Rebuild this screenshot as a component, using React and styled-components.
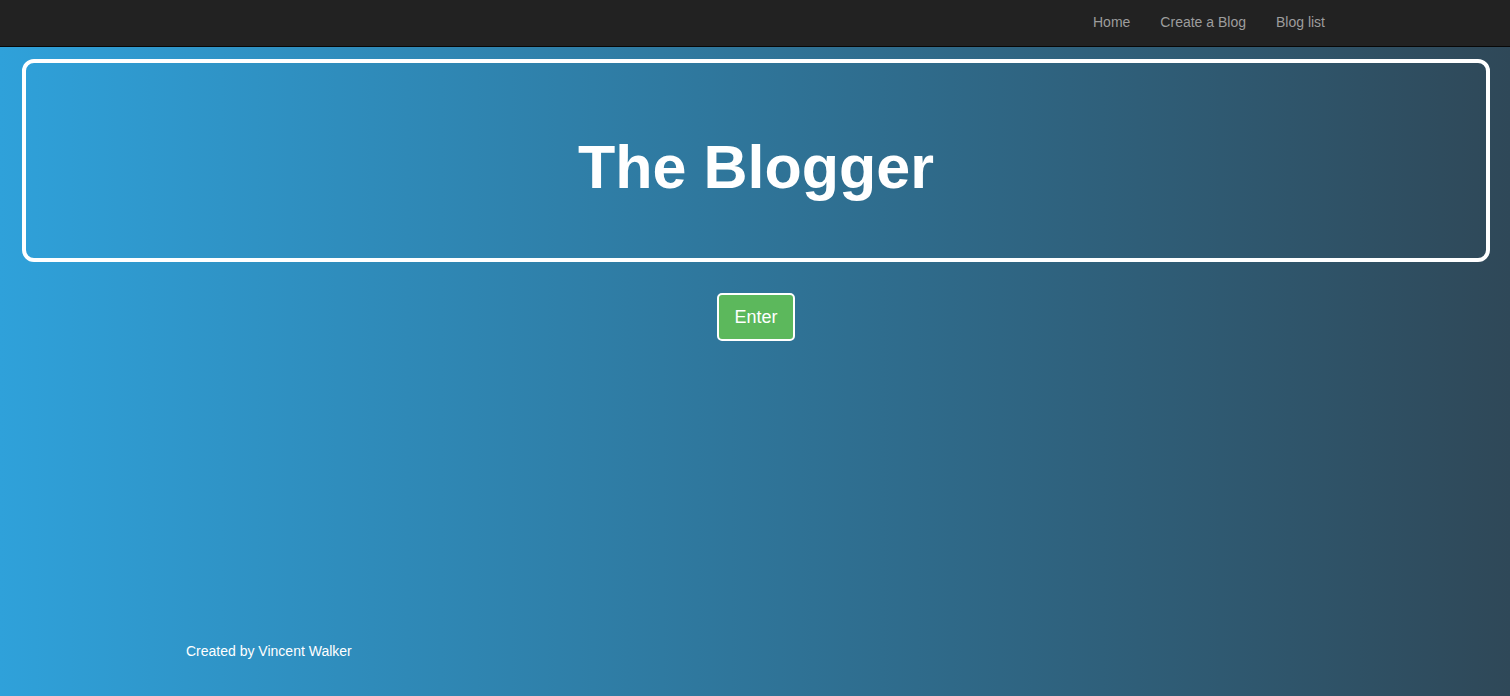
import React from "react";
import styled, { createGlobalStyle } from "styled-components";

const GlobalStyle = createGlobalStyle`
  html, body { margin: 0; padding: 0; }
  body {
    font-family: "Liberation Sans", Arial, Helvetica, sans-serif;
    font-size: 14px;
    line-height: 20px;
  }
  * { box-sizing: border-box; }
`;

const Page = styled.div`
  min-height: 100vh;
  display: flex;
  flex-direction: column;
  background: linear-gradient(to right, #2fa1da 0%, #2f4858 100%);
`;

const Navbar = styled.nav`
  height: 47px;
  background: #222222;
  border-bottom: 1px solid #080808;
`;

const NavContainer = styled.div`
  width: 1170px;
  margin: 0 auto;
  display: flex;
  justify-content: flex-end;
`;

const NavList = styled.ul`
  list-style: none;
  margin: 0;
  padding: 0;
  display: flex;
`;

const NavLink = styled.a`
  display: block;
  padding: 12px 15px 14px;
  color: #9d9d9d;
  text-decoration: none;
  font-size: 14px;
  line-height: 20px;
`;

const Main = styled.main`
  flex: 1;
  padding: 12px 20px 0 22px;
  display: flex;
  flex-direction: column;
  align-items: center;
`;

const Hero = styled.section`
  width: 100%;
  border: 4px solid #ffffff;
  border-radius: 12px;
  padding: 71px 0 57px;
  text-align: center;
`;

const Title = styled.h1`
  margin: 0;
  color: #ffffff;
  font-size: 61px;
  line-height: 67px;
  font-weight: 700;
`;

const EnterButton = styled.button`
  margin-top: 31px;
  background: #5cb85c;
  color: #ffffff;
  border: 2px solid #ffffff;
  border-radius: 5px;
  padding: 10px 15.5px;
  font-family: "Liberation Sans", Arial, sans-serif;
  font-size: 18px;
  line-height: 24px;
  cursor: pointer;
`;

const Footer = styled.footer`
  width: 1170px;
  margin: 0 auto;
  padding: 0 15px 35px 16px;
  color: #ffffff;
  font-size: 14px;
  line-height: 20px;
`;

export default function App() {
  return (
    <>
      <GlobalStyle />
      <Page>
        <Navbar>
          <NavContainer>
            <NavList>
              <li><NavLink href="#">Home</NavLink></li>
              <li><NavLink href="#">Create a Blog</NavLink></li>
              <li><NavLink href="#">Blog list</NavLink></li>
            </NavList>
          </NavContainer>
        </Navbar>
        <Main>
          <Hero>
            <Title>The Blogger</Title>
          </Hero>
          <EnterButton>Enter</EnterButton>
        </Main>
        <Footer>Created by Vincent Walker</Footer>
      </Page>
    </>
  );
}
